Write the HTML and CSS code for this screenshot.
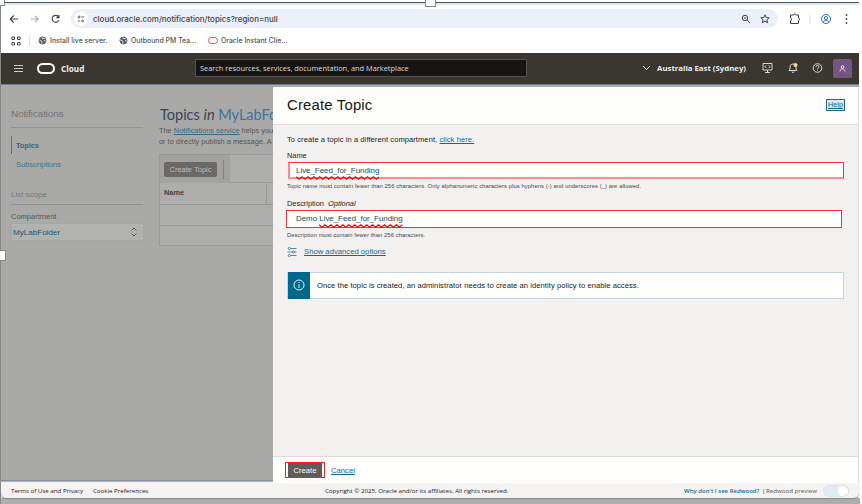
FILE: index.html
```html
<!DOCTYPE html>
<html lang="en">
<head>
<meta charset="utf-8">
<title>Create Topic</title>
<link rel="stylesheet" href="styles.css">
</head>
<body>
<div class="window">
  <div class="toolbar">
    <svg class="nav" viewBox="0 0 54 12"><path d="M9 6H1.500M4.700 2.500 1.200 6l3.500 3.500"/><path class="faint" d="M22 6h7M26 2.800 29.200 6 26 9.200"/><path d="M49.600 4A3.500 3.500 0 1 0 49.800 7.300M50 2v2.600h-2.700"/></svg>
    <div class="address">
      <span class="site"><svg viewBox="0 0 10 10"><path d="M5 2.500h4M1 7.500h3"/><circle cx="2.500" cy="2.500" r="1.200"/><circle cx="7" cy="7.500" r="1.200"/></svg></span>
      <span class="url">cloud.oracle.com/notification/topics?region=null</span>
      <svg class="addr-icons" viewBox="0 0 30 12"><circle cx="4" cy="5" r="2.700"/><path d="M6 7l3 3M2.800 5h2.400M24 1.800l1.200 2.700 3 .3-2.300 2 .7 3L24 8.200 21.400 9.800l.7-3-2.300-2 3-.3z"/></svg>
    </div>
    <svg class="right-icons" viewBox="0 0 64 14"><path d="M1.500 3h3c0-1.500 2.500-1.500 2.500 0h2.500v3c1.500 0 1.500 2.500 0 2.500v3h-8v-3c1.500 0 1.500-2.500 0-2.500z"/><path d="M21 3v8" stroke="#c9def8"/><g stroke="#2d6cd4"><circle cx="37" cy="7" r="4.500"/><circle cx="37" cy="6" r="1.600"/><path d="M34 10c1.500-2 4.500-2 6 0"/></g><g fill="#444" stroke="none"><circle cx="57.500" cy="3" r=".9"/><circle cx="57.500" cy="7" r=".9"/><circle cx="57.500" cy="11" r=".9"/></g></svg>
  </div>
  <div class="bookmarks">
    <svg class="apps" viewBox="0 0 10 10"><path d="M1 1h2.500v2.500H1zM6.500 1H9v2.500H6.500zM1 6.500h2.500V9H1zM6.500 6.500H9V9H6.500z"/></svg>
    <i class="bar"></i>
    <svg class="globe" viewBox="0 0 9 9"><circle cx="4.500" cy="4.500" r="3.600"/><path d="M1 3.800l2.200.9.600 1.200v1.800M4 1.300l.5 1.500 2.600-.6M7.800 5.200 6 4.500"/></svg>
    <span class="bm b1">Install live server.</span>
    <svg class="globe" viewBox="0 0 9 9"><circle cx="4.500" cy="4.500" r="3.600"/><path d="M1 3.800l2.200.9.600 1.200v1.800M4 1.300l.5 1.500 2.600-.6M7.800 5.200 6 4.500"/></svg>
    <span class="bm b2">Outbound PM Tea...</span>
    <i class="red-o"></i>
    <span class="bm">Oracle Instant Clie...</span>
  </div>
  <header class="cloudbar">
    <i class="burger"></i><i class="logo"></i><span class="brand">Cloud</span>
    <div class="search">Search resources, services, documentation, and Marketplace</div>
    <svg class="chev" viewBox="0 0 9 6"><path d="M1 1l3.500 3.600L8 1"/></svg>
    <span class="region">Australia East (Sydney)</span>
    <svg class="tools" viewBox="0 0 62 12"><path d="M1 1.500h9V8H1zM5.500 8v2.500M3 10.500h5M4.300 3.300 3 4.700l1.300 1.400M6.700 3.300 8 4.700 6.700 6.100"/><path d="M27 8.500l1-1.500V5c0-4 6-4 6 0v2l1 1.500zM30 9.500c0 1.500 2 1.500 2 0"/><circle cx="33.500" cy="3" r="2" fill="#f6d98b" stroke="none"/><circle cx="55.500" cy="6" r="4.300"/><path d="M54 5c0-2.200 3-1.800 3-.2 0 1-1.500 1-1.500 2M55.500 7.700v.8"/></svg>
    <div class="avatar"><svg viewBox="0 0 19 19"><path class="hatch" d="M0 12 10 2l9 9M0 16 10 6l9 9M0 19 10 10l9 9M0 8l8-8M12 0l7 7"/><circle cx="9.500" cy="8" r="1.300"/><path d="M7 12.500c0-3.500 5-3.500 5 0"/></svg></div>
  </header>
  <main class="page">
    <aside class="side">
      <h3>Notifications</h3>
      <nav><a class="active">Topics</a><a>Subscriptions</a></nav>
      <h4>List scope</h4>
      <label>Compartment</label>
      <div class="select">MyLabFolder<svg viewBox="0 0 8 10"><path d="M1.500 3.500 4 1l2.500 2.500M1.500 6.500 4 9l2.500-2.500"/></svg></div>
    </aside>
    <section class="topics">
      <h1>Topics <em>in</em> <b>MyLabFolder</b></h1>
      <p>The <u>Notifications service</u> helps you<br>or to directly publish a message. A</p>
      <div class="table">
        <div class="actions"><div class="shade"><span class="create">Create Topic</span><i></i></div></div>
        <div class="thead">Name</div><div class="trow"></div><div class="trow"></div>
      </div>
    </section>
    <section class="drawer">
      <div class="dhead"><h2>Create Topic</h2><a class="help">Help</a></div>
      <div class="dbody">
        <p class="intro">To create a topic in a different compartment, <u>click here.</u></p>
        <label class="lname">Name</label>
        <div class="input name"><span class="wavy">Live_Feed_for_Funding<svg class="wave" preserveAspectRatio="none" viewBox="0 0 84 4"><path d="M0 .8l3 2.400 3-2.400 3 2.400 3-2.400 3 2.400 3-2.400 3 2.400 3-2.400 3 2.400 3-2.400 3 2.400 3-2.400 3 2.400 3-2.400 3 2.400 3-2.400 3 2.400 3-2.400 3 2.400 3-2.400 3 2.400 3-2.400 3 2.400 3-2.400 3 2.400 3-2.400 3 2.400 3-2.400"/></svg></span></div>
        <p class="hint h1">Topic name must contain fewer than 256 characters. Only alphanumeric characters plus hyphens (-) and underscores (_) are allowed.</p>
        <label class="ldesc">Description <em>Optional</em></label>
        <div class="input desc">Demo&nbsp;<span class="wavy">Live_Feed_for_Funding<svg class="wave" preserveAspectRatio="none" viewBox="0 0 84 4"><path d="M0 .8l3 2.400 3-2.400 3 2.400 3-2.400 3 2.400 3-2.400 3 2.400 3-2.400 3 2.400 3-2.400 3 2.400 3-2.400 3 2.400 3-2.400 3 2.400 3-2.400 3 2.400 3-2.400 3 2.400 3-2.400 3 2.400 3-2.400 3 2.400 3-2.400 3 2.400 3-2.400 3 2.400 3-2.400"/></svg></span></div>
        <p class="hint h2">Description must contain fewer than 256 characters.</p>
        <div class="advanced"><svg viewBox="0 0 10 10"><path d="M4 1.500h5.500M.5 5H5M8 5h1.500M4 8.500h5.500"/><circle cx="2.300" cy="1.500" r="1.100"/><circle cx="6.500" cy="5" r="1.100"/><circle cx="2.300" cy="8.500" r="1.100"/></svg><u>Show advanced options</u></div>
        <div class="notice"><div class="info"><svg viewBox="0 0 12 12"><circle cx="6" cy="6" r="5"/><path d="M6 5.200V9M6 3v1"/></svg></div><span>Once the topic is created, an administrator needs to create an identity policy to enable access.</span></div>
      </div>
      <div class="dfoot"><div class="mark"><button>Create</button></div><u>Cancel</u></div>
    </section>
  </main>
  <footer class="legal">
    <span class="f1">Terms of Use and Privacy</span><span class="f2">Cookie Preferences</span><span class="f3">Copyright © 2025, Oracle and/or its affiliates. All rights reserved.</span><span class="f4">Why don't I see Redwood?</span><span class="f5">|</span><span class="f6">Redwood preview</span><i class="toggle"></i>
  </footer>
</div>
<i class="handle top"></i><i class="handle left"></i><i class="handle corner"></i>
</body>
</html>
```
FILE: styles.css
```css
* { box-sizing: border-box; }
body { margin: 0; width: 862px; height: 504px; overflow: hidden; padding-top: 2px; background: linear-gradient(90deg, transparent 860px, #fff 860px), linear-gradient(#fff 0 498px, #adadad 498px); font-family: "Liberation Sans", sans-serif; position: relative; color: #222; }
h1, h2, h3, h4, p { margin: 0; font-weight: normal; }
svg { display: block; fill: none; stroke: #444; flex: none; }
span, a, label, u, h1, h2, h3, h4, p { white-space: nowrap; }
i { flex: none; }
.window { width: 858px; height: 502px; margin-left: 1px; border-top: 1px solid #555; box-shadow: -1px 0 #888; }
.toolbar { height: 27px; border-top: 2px solid #d8e8fb; display: flex; align-items: center; padding-top: 2px; background: #fff; }
.nav { width: 54px; height: 12px; margin-left: 8px; stroke-width: 1.1; }
.faint { stroke: #aaa; }
.address { width: 707px; height: 19px; margin-left: 8px; border-radius: 10px; background: #ebeff9; display: flex; align-items: center; padding-left: 3px; }
.site { width: 14px; height: 14px; border-radius: 7px; background: #fff; padding: 3px; }
.site svg { width: 8px; height: 8px; }
.url { font: 500 7.95px Inter, sans-serif; width: 230px; margin-left: 5px; color: #444; }
.addr-icons { width: 30px; height: 12px; margin-left: 418px; }
.right-icons { width: 64px; height: 14px; margin-left: 11px; }
.bookmarks { height: 23px; background: #fff; display: flex; align-items: center; padding: 0 0 2px 10px; font: 500 6.9px Inter, sans-serif; color: #555; }
.apps { width: 10px; height: 10px; }
.bar { width: 1px; height: 10px; background: #cfe2fa; margin: 0 8px 0 8px; }
.globe { width: 9px; height: 9px; stroke: #fff; fill: #555f69; stroke-width: .8; margin-right: 3px; }
.globe circle { stroke: #555f69; }
.b1 { width: 69px; }
.b2 { width: 74px; }
.red-o { width: 10px; height: 7px; border: 1.5px solid #e2513f; border-radius: 3.5px; margin: 0 3px 0 3px; }
.cloudbar { height: 31px; background: #3a3631; display: flex; align-items: center; padding-left: 13px; padding-bottom: 1px; color: #eee; font-family: "Open Sans", sans-serif; }
.burger { width: 9px; height: 7px; background: linear-gradient(#ccc 0 1px, transparent 1px 3px, #ccc 3px 4px, transparent 4px 6px, #ccc 6px); }
.logo { width: 18px; height: 11px; border: 2px solid #fff; border-radius: 6px; margin-left: 14px; }
.brand { font-size: 8.2px; font-weight: 700; width: 134px; margin-left: 6px; }
.search { width: 332px; height: 18px; border: 1px solid #55514c; background: #171614; font: 7.4px/16px "Open Sans", sans-serif; padding-left: 4px; color: #ddd; white-space: nowrap; }
.cloudbar svg { stroke: #e8e8e8; }
.cloudbar .chev { width: 9px; height: 6px; margin-left: 115px; }
.region { font-size: 7.8px; font-weight: 700; margin-left: 6px; width: 105px; }
.cloudbar .tools { width: 62px; height: 12px; stroke-width: .9; }
.avatar { width: 19px; height: 19px; background: #74527f; border-radius: 2px; margin-left: 9px; }
.avatar .hatch { stroke: #8b6b95; stroke-width: .5; }
.page { height: 399px; border-top: 1px solid #6d7b8e; border-bottom: 1px solid #f0f0f0; background: linear-gradient(#a9a9a8 395px, #858d9a 395px 396px, #b8b8b7 396px); display: flex; }
.side { width: 134px; margin-left: 10px; padding-top: 21px; }
.side h3 { font-size: 9.9px; line-height: 16px; height: 22px; letter-spacing: -.1px; color: #737372; border-bottom: 1px solid #929291; width: 132px; }
.side nav { padding-top: 8px; width: 132px; }
.side a { display: block; height: 18px; font-size: 7.5px; line-height: 19px; color: #47707e; padding-left: 5px; }
.side .active { font-weight: 700; font-size: 7.2px; border-left: 1px solid #47778a; margin-bottom: 1px; padding-left: 4px; color: #356778; }
.side h4 { font-size: 8px; line-height: 12px; color: #777; margin-top: 16px; height: 16px; border-bottom: 1px solid #929291; width: 132px; }
.side label { display: block; font-size: 7.5px; line-height: 9px; margin-top: 7px; color: #555; }
.select { width: 133px; height: 18px; margin-top: 2px; padding: 0 5px 0 1px; background: #b2b2b1; border: 1px solid #a6a6a5; color: #28566a; font-size: 8.1px; display: flex; align-items: center; justify-content: space-between; }
.select svg { width: 8px; height: 10px; stroke: #555; }
.topics { width: 114px; margin-left: 14px; overflow: hidden; padding-top: 20px; }
.topics h1 { font: 14.5px/20px Lato, sans-serif; margin-left: 1px; color: #3a4254; }
.topics b { color: #42719f; font-weight: normal; }
.topics p { font-size: 7.4px; line-height: 10.5px; color: #555; margin-top: 1px; }
.topics u { color: #356981; }
.table { width: 200px; height: 92px; border: 1px solid #999; margin-top: 7px; background: #adadac; }
.actions { height: 28px; border-bottom: 1px solid #999; }
.shade { width: 70px; height: 28px; background: #a2a2a1; display: flex; align-items: center; padding-left: 4px; }
.create { width: 53px; height: 15px; border-radius: 2px; background: #6b6865; color: #bbb; font-size: 7.5px; line-height: 15px; text-align: center; flex: none; }
.shade i { width: 1px; height: 19px; background: #c46767; margin-left: 6px; }
.thead { height: 21px; width: 107px; font-size: 7.4px; font-weight: 700; line-height: 20px; padding-left: 4px; border-right: 1px solid #999; color: #444; }
.trow { height: 21px; border-top: 1px solid #999; }
.drawer { width: 586px; height: 396px; margin-top: 2px; background: #f2f1f0; display: flex; flex-direction: column; border-right: 1px solid #ddd; }
.dhead { height: 38px; background: #fdfdfc; border-bottom: 1px solid #dedddb; display: flex; align-items: center; justify-content: space-between; padding: 0 13px 0 14px; }
.dhead h2 { font-size: 14.9px; letter-spacing: .18px; color: #181818; }
.help { width: 19px; height: 12px; border: 1px solid #20677f; background: #d9e9ef; text-decoration: underline; font-size: 7.3px; line-height: 10px; text-align: center; color: #156789; }
.drawer u { color: #146b8d; }
.dbody { height: 332px; padding-left: 14px; display: flex; flex-direction: column; align-items: flex-start; }
.intro { font-size: 7.5px; letter-spacing: .09px; line-height: 10px; margin-top: 10px; }
.lname, .ldesc { font-size: 7.4px; line-height: 9px; margin-top: 6px; }
.ldesc em { margin-left: 2px; }
.input { height: 17px; background: #fefefd; border: 1px solid #e33; color: #164f66; font-size: 7.9px; line-height: 16px; white-space: pre; }
.name { width: 556px; margin: 2px 0 0 1px; padding-left: 6px; border-left: 2px solid #f88; border-bottom: 2px solid #f99090; }
.desc { width: 556px; margin: 2px 0 0 -1px; padding-left: 9px; height: 18px; }
.wavy { display: inline-block; position: relative; }
.wave { position: absolute; left: 0; bottom: -1px; width: 100%; height: 4px; stroke: #f00; stroke-width: 1.2; }
.hint { font-size: 5.8px; letter-spacing: .09px; line-height: 8px; color: #444; }
.h1 { margin-top: 3px; }
.ldesc { margin-top: 9px; }
.h2 { margin-top: 3px; }
.advanced { display: flex; align-items: center; gap: 7px; font-size: 7.7px; line-height: 10px; margin-top: 8px; }
.advanced svg { width: 10px; height: 10px; stroke: #26708a; stroke-width: .8; }
.notice { width: 557px; height: 27px; border: 1px solid #c5d6df; background: #fefefd; display: flex; align-items: center; margin-top: 15px; font-size: 7.6px; letter-spacing: .055px; }
.info { width: 22px; height: 27px; background: #00688c; display: flex; align-items: center; justify-content: center; margin-right: 7px; flex: none; }
.info svg { width: 12px; height: 12px; stroke: #fff; stroke-width: .9; }
.dfoot { height: 27px; border-top: 1px solid #dcdcda; background: #fefefd; display: flex; align-items: center; padding-left: 12px; font-size: 7.7px; }
.mark { width: 40px; height: 16px; border: 1px solid #e22; display: flex; padding-left: 2px; margin-right: 6px; flex: none; }
.mark button { border: 0; padding: 0; width: 34px; height: 14px; background: #625b57; color: #fff; font: 7.6px "Liberation Sans", sans-serif; }
.legal { height: 15px; background: #f4f3f2; display: flex; align-items: center; font: 6.15px "Open Sans", sans-serif; color: #222; padding-left: 10px; border-radius: 0 0 5px 5px; box-shadow: 0 1px 1px #888; }
.f1 { width: 82px; }
.f2 { width: 232px; }
.f3 { width: 359px; }
.f4 { width: 78px; color: #12708f; font-weight: 600; font-size: 6px; }
.f5 { width: 4px; }
.f6 { color: #555; }
.toggle { width: 26px; height: 12px; border-radius: 6px; border: 1px solid #d5e4e9; background: radial-gradient(circle at 19px 5px, #fff 0 5px, #dfedf2 5.5px); margin-left: auto; margin-right: 10px; }
.handle { position: absolute; background: #fff; border: 1px solid #888; }
.top { left: 425px; top: -3px; width: 11px; height: 10px; }
.left { left: -5px; top: 250px; width: 11px; height: 11px; }
.corner { left: -5px; top: -4px; width: 10px; height: 10px; }
```
